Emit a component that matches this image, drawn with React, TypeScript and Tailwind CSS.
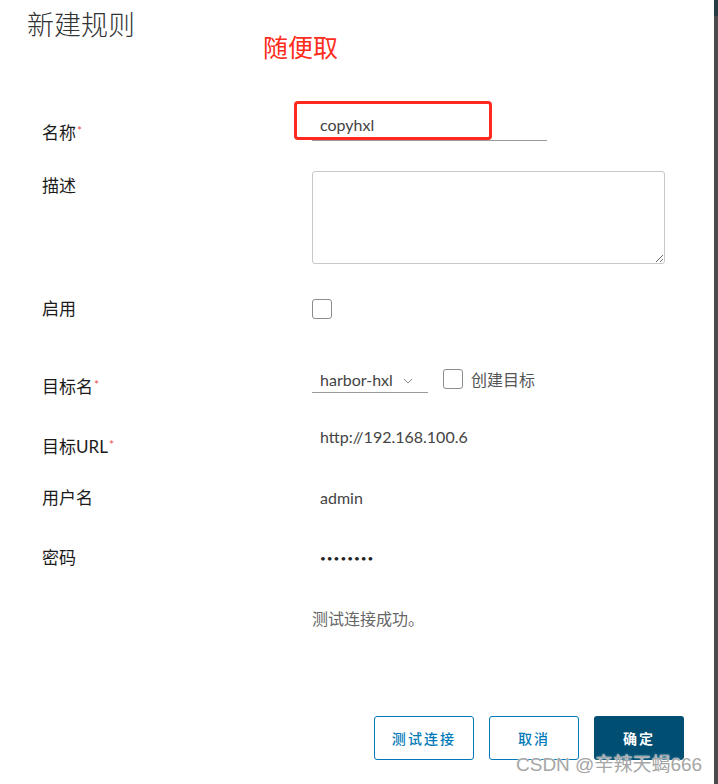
import { type ReactNode } from 'react';

const cjk = '"Lato","Noto Sans CJK SC",sans-serif';

function Req() {
  return <span className="text-[#f0524a] text-[12px] align-top relative top-[-2px] ml-[1px]">*</span>;
}

// label column never sets the row's height: the control does
function Row({ label, labelPad = 0, required, children, className = '' }: { label: string; labelPad?: number; required?: boolean; children: ReactNode; className?: string }) {
  return (
    <div className={`flex ${className}`}>
      <div className="w-[270px] h-0 shrink-0 overflow-visible text-[17px] leading-[24px] text-[#1b1b1b] whitespace-nowrap" style={{ paddingTop: labelPad }}>
        {label}
        {required && <Req />}
      </div>
      <div className="flex-1">{children}</div>
    </div>
  );
}

function Box({ className = '' }: { className?: string }) {
  return <span className={`block w-[20px] h-[20px] rounded-[3px] border border-[#8c8c8c] bg-white ${className}`} />;
}

export default function App() {
  return (
    <div className="relative w-[718px] h-[784px] bg-[#4a4a4a] overflow-hidden" style={{ fontFamily: cjk }}>
      <div className="absolute right-0 top-0 w-[4px] h-[16px] bg-[#263b44]" />
      <div className="relative w-[714px] h-[784px] bg-white">
        <h1 className="pl-[27px] pt-[7px] text-[27px] leading-[36px] font-light text-[#333]">新建规则</h1>

        {/* annotation */}
        <div className="absolute left-[263px] top-[32px] text-[25px] leading-[30px] text-[#ff2d1c]">随便取</div>
        <div className="absolute left-[294px] top-[101px] w-[198px] h-[39px] rounded-[4px] border-[3px] border-[#ff2a1f]" />

        <div className="pl-[42px] pt-[67px] flex flex-col">
          <Row label="名称" required labelPad={11}>
            <div className="w-[235px] h-[31px] border-b border-[#9a9a9a] pl-[8px] pt-[3px] text-[16px] leading-[24px] text-[#444]">copyhxl</div>
          </Row>

          <Row label="描述" labelPad={3} className="mt-[30px]">
            <textarea className="block w-[353px] h-[93px] rounded-[3px] border border-[#c8c8c8] outline-none resize" />
          </Row>

          <Row label="启用" className="mt-[33px]">
            <Box className="mt-[2px]" />
          </Row>

          <Row label="目标名" required labelPad={8} className="mt-[48px]">
            <div className="flex items-center h-[26px]">
              <div className="w-[116px] h-[26px] border-b border-[#9a9a9a] pl-[8px] flex items-center text-[16px] leading-[24px] text-[#444]">
                <span>harbor-hxl</span>
                <svg width="10" height="6" viewBox="0 0 10 6" className="ml-[10px] mt-[2px]">
                  <polyline points="1,1 5,5 9,1" fill="none" stroke="#8a8a8a" strokeWidth="1" />
                </svg>
              </div>
              <Box className="ml-[15px] mt-[-2px]" />
              <span className="ml-[8px] text-[16px] leading-[22px] text-[#555]">创建目标</span>
            </div>
          </Row>

          <Row label="目标URL" required labelPad={10} className="mt-[32px]">
            <div className="pl-[8px] text-[16px] leading-[24px] text-[#444]">http://192.168.100.6</div>
          </Row>

          <Row label="用户名" className="mt-[37px]">
            <div className="pl-[8px] text-[16px] leading-[24px] text-[#444]">admin</div>
          </Row>

          <Row label="密码" className="mt-[36px]">
            <div className="pl-[8px] text-[10px] leading-[24px] text-[#222] tracking-[1px]">••••••••</div>
          </Row>

          <div className="mt-[37px] pl-[270px] text-[16px] leading-[24px] text-[#666]">测试连接成功。</div>
        </div>

        <div className="absolute left-[374px] top-[716px] flex gap-[15px]">
          <button className="w-[100px] h-[44px] rounded-[3px] border border-[#0079b8] bg-white text-[#0079b8] text-[14px] font-medium tracking-[0.15em]">测试连接</button>
          <button className="w-[90px] h-[44px] rounded-[3px] border border-[#0079b8] bg-white text-[#0079b8] text-[14px] font-medium tracking-[0.15em]">取消</button>
          <button className="w-[90px] h-[44px] rounded-[3px] bg-[#004f72] text-white text-[14px] font-bold tracking-[0.15em]">确定</button>
        </div>

        {/* watermark */}
        <div
          className="absolute left-[516px] top-[752px] text-[19px] leading-[26px] text-[#a6a6a6]"
          style={{ fontFamily: '"Liberation Sans","Noto Sans CJK SC",sans-serif', textShadow: '0 0 1px #fff, 0 0 2px #fff' }}
        >
          CSDN @辛辣天蝎666
        </div>
      </div>
    </div>
  );
}
